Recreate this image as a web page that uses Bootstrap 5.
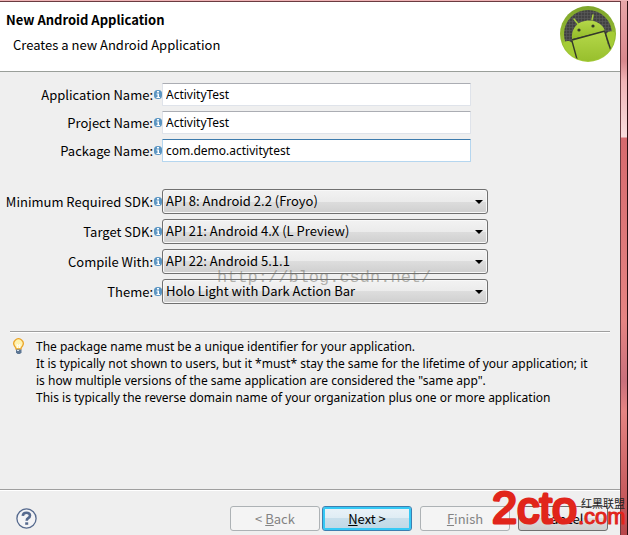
<!DOCTYPE html>
<html lang="en">
<head>
<meta charset="utf-8">
<meta name="viewport" content="width=device-width, initial-scale=1">
<title>New Android Application</title>
<link href="https://cdn.jsdelivr.net/npm/bootstrap@5.3.0/dist/css/bootstrap.min.css" rel="stylesheet">
<style>
  body { font-family: "Noto Sans CJK SC", "Noto Sans", sans-serif; font-size: 13px; line-height: 17px; color: #000; background: #efefef; }
  .window-frame { border-top: 1px solid #efb4b6; background: linear-gradient(#e9a5a8 0, #d8888d 60px, #f1b4b6 80px, #f8dcdc 136px, #d66a6e 137px, #e58483 320px, #c9707c 380px, #e58483 410px, #b8474b 100%); padding-right: 7px; box-shadow: inset -1px 0 #2b0d10; }
  .wizard { background: #efefef; border-top: 1px solid #6b3b40; border-right: 1px solid #6b3b40; }
  .wizard-head { background: #fff; border-bottom: 1px solid #9a9f9a; padding: 4px 4px 5px 6px; }
  .wizard-head h1 { font-size: 13px; line-height: 17px; margin: 5px 0 8px; }
  .wizard-head p { padding-left: 7px; }
  .form-area { padding: 11px 10px 0; }
  .form-line { display: grid; grid-template-columns: 143px 8px 1fr; column-gap: 1px; align-items: center; }
  .form-line label { display: flex; justify-content: flex-end; white-space: nowrap; padding-bottom: 1px; }
  .form-line svg { justify-self: center; }
  .fields { display: grid; row-gap: 5px; margin-right: 1px; }
  .fields .form-control, .combos .form-select { margin-left: -1px; color: #000; padding: 2px 3px; line-height: 17px; }
  .fields .form-control { font-family: "Noto Sans", sans-serif; font-size: 12px; max-width: 309px; height: 23px; border: 1px solid #dfe3ea; border-top-color: #abadb3; border-radius: 1px; }
  .fields .form-control.current { border-color: #b5d6ef; border-top-color: #3d7bad; }
  .combos { display: grid; row-gap: 5px; margin-top: 27px; }
  .combos .form-select { font-size: 13px; padding: 1px 3px 3px; max-width: 326px; height: 25px; border: 1px solid #707070; border-radius: 3px; box-shadow: inset 0 0 0 1px #f8f8f8;
    background: url("data:image/svg+xml,%3Csvg xmlns='http://www.w3.org/2000/svg' width='8' height='4'%3E%3Cpath d='M0 0h8L4 4z'/%3E%3C/svg%3E") no-repeat right 4px center / 8px 4px, linear-gradient(#f2f2f2, #ebebeb 50%, #dddddd 50%, #cfcfcf); }
  .watermark { top: 267px; left: 217px; font: 17px/20px "Liberation Mono", monospace; color: rgba(110, 110, 100, .5); pointer-events: none; }
  .rule { border-top: 1px solid #9f9f9f; border-bottom: 1px solid #fff; }
  .form-area .rule { margin-top: 27px; }
  .hint { padding: 5px 0 0 2px; gap: 10px; min-height: 152px; }
  .hint p { font-family: "Noto Sans", sans-serif; font-size: 12px; }
  .actions { padding: 15px 12px 4px 16px; }
  .action-btn { width: 90px; height: 25px; padding: 0; font-size: 13px; line-height: 17px; border-radius: 3px; color: #000; border: 1px solid #707070; background: linear-gradient(#f2f2f2, #ebebeb 50%, #ddd 50%, #cfcfcf); }
  .action-btn:disabled { color: #838383; border-color: #adb2b5; background: #f4f4f4; opacity: 1; }
  .action-btn.primary { border-color: #3c7fb1; box-shadow: inset 0 0 0 2px #35c9f5; background: linear-gradient(#eaf3f8, #dfecf4 50%, #c9dfeb 50%, #bfd8e6); }
  .step-pair { gap: 2px; }
  .site-logo { right: 0; bottom: 6px; pointer-events: none; }
</style>
<script src="https://cdn.jsdelivr.net/npm/bootstrap@5.3.0/dist/js/bootstrap.bundle.min.js"></script>
</head>
<body>
<svg width="0" height="0" class="position-absolute" aria-hidden="true">
  <symbol id="info" viewBox="0 0 8 9"><rect width="8" height="9" rx="3.500" fill="#5b95c2"/><path d="M3 1h2v1.500H3zM2.500 3.500H5V7h1v1H2.500V7h1V4.500h-1z" fill="#fff"/></symbol>
</svg>
<div class="window-frame position-relative min-vh-100 d-flex flex-column">
<main class="wizard flex-grow-1 d-flex flex-column">
  <header class="wizard-head d-flex justify-content-between">
    <div>
      <h1 class="fw-bold">New Android Application</h1>
      <p class="mb-0">Creates a new Android Application</p>
    </div>
    <svg width="56" height="60" viewBox="0 0 56 60" aria-hidden="true">
      <defs>
        <linearGradient id="ring" x2="0" y2="1"><stop stop-color="#7fa52c"/><stop offset="1" stop-color="#a4cb38"/></linearGradient>
        <linearGradient id="skin" x2="0" y2="1"><stop stop-color="#b5d84a"/><stop offset="1" stop-color="#93bb28"/></linearGradient>
        <pattern id="mesh" width="3" height="3" patternUnits="userSpaceOnUse"><path fill="#424242" d="M0 0h3v3H0z"/><path stroke="#5c5c5c" stroke-width=".6" d="M0 .5h3M.5 0v3"/></pattern>
        <clipPath id="disc"><circle cx="28" cy="28" r="27"/></clipPath>
      </defs>
      <circle cx="28" cy="28" r="28" fill="url(#ring)"/>
      <circle cx="28" cy="28" r="24" fill="url(#mesh)"/>
      <g clip-path="url(#disc)">
        <path d="M12 34L44 25L54 60H14z" fill="url(#skin)"/>
        <path d="M12 33C11 23 17 16 25 15C34 13 43 18 45 25z" fill="url(#skin)"/>
        <path d="M1 41Q3 34 9 35L13 37L19 58H2zM46 28Q49 23 56 27V45L50 48z" fill="#a5cc36"/>
        <path d="M12 34L45 25M12 35L18 57M45 26L52 48" fill="none" stroke="#34382b" stroke-width="1.400"/>
      </g>
      <path d="M18 18L14 13M32 14L33 9" stroke="#a9d03c" stroke-width="1.500" stroke-linecap="round"/>
      <circle cx="19" cy="24" r="1.600" fill="#343a28"/><circle cx="33" cy="20" r="1.600" fill="#343a28"/>
    </svg>
  </header>

  <form class="flex-grow-1 d-flex flex-column">
    <div class="form-area flex-grow-1">
      <div class="fields">
        <div class="form-line"><label for="appName">Application Name:</label><svg width="8" height="9" aria-hidden="true"><use href="#info"/></svg><input id="appName" type="text" class="form-control" value="ActivityTest"></div>
        <div class="form-line"><label for="projectName">Project Name:</label><svg width="8" height="9" aria-hidden="true"><use href="#info"/></svg><input id="projectName" type="text" class="form-control" value="ActivityTest"></div>
        <div class="form-line"><label for="packageName">Package Name:</label><svg width="8" height="9" aria-hidden="true"><use href="#info"/></svg><input id="packageName" type="text" class="form-control current" value="com.demo.activitytest"></div>
      </div>
      <div class="combos">
        <div class="form-line"><label for="minSdk">Minimum Required SDK:</label><svg width="8" height="9" aria-hidden="true"><use href="#info"/></svg><select id="minSdk" class="form-select"><option>API 8: Android 2.2 (Froyo)</option></select></div>
        <div class="form-line"><label for="targetSdk">Target SDK:</label><svg width="8" height="9" aria-hidden="true"><use href="#info"/></svg><select id="targetSdk" class="form-select"><option>API 21: Android 4.X (L Preview)</option></select></div>
        <div class="form-line"><label for="compileWith">Compile With:</label><svg width="8" height="9" aria-hidden="true"><use href="#info"/></svg><select id="compileWith" class="form-select"><option>API 22: Android 5.1.1</option></select></div>
        <div class="form-line"><label for="theme">Theme:</label><svg width="8" height="9" aria-hidden="true"><use href="#info"/></svg><select id="theme" class="form-select"><option>Holo Light with Dark Action Bar</option></select></div>
      </div>
      <div class="rule"></div>
      <div class="hint d-flex">
        <svg class="flex-shrink-0" width="14" height="17" viewBox="0 0 14 17" aria-hidden="true">
          <path d="M4 11Q4 9.500 2.500 8A4.700 4.700 0 1 1 10.500 8Q9 9.500 9 11z" fill="#fff3b0" stroke="#eba62b" stroke-width="1.300"/>
          <path d="M5.500 10L5 6.500L6.500 7.500L8 6.500L7.500 10" fill="none" stroke="#fff"/>
          <path d="M4 11.500h5.500v3L8 16H5.500L4 14.500z" fill="#5d7693"/><path d="M5 12.500h2" stroke="#dce5ee"/>
        </svg>
        <p class="mb-0">The package name must be a unique identifier for your application.<br>It is typically not shown to users, but it *must* stay the same for the lifetime of your application; it<br>is how multiple versions of the same application are considered the "same app".<br>This is typically the reverse domain name of your organization plus one or more application</p>
      </div>
    </div>
    <div class="rule"></div>
    <footer class="actions d-flex align-items-center">
      <button type="button" class="btn p-0 border-0 me-auto lh-1" aria-label="Help">
        <svg class="d-block" width="21" height="21" viewBox="0 0 21 21" aria-hidden="true"><circle cx="10.500" cy="10.500" r="9.600" fill="#f4f4f6" stroke="#566a8e" stroke-width="1.300"/><path d="M6.800 7.800Q7 4.700 10.500 4.700Q14 4.700 14 7.500Q14 9 12.200 10.200Q10.700 11.200 10.700 12.800" fill="none" stroke="#566a8e" stroke-width="2.600"/><path d="M9.200 14.300h3v2.500h-3z" fill="#566a8e"/></svg>
      </button>
      <div class="d-flex gap-2">
        <div class="d-flex step-pair">
          <button type="button" class="btn action-btn" disabled>&lt; <u>B</u>ack</button>
          <button type="submit" class="btn action-btn primary"><u>N</u>ext &gt;</button>
        </div>
        <button type="button" class="btn action-btn" disabled><u>F</u>inish</button>
        <button type="button" class="btn action-btn">Cancel</button>
      </div>
    </footer>
  </form>
</main>
<div class="watermark position-absolute">http://blog.csdn.net/</div>
<svg class="site-logo position-absolute" width="138" height="42" viewBox="0 0 138 42" role="img" aria-label="2cto.com">
  <g fill="#e1251b" stroke="#e1251b" stroke-linejoin="round" font-family="Liberation Sans, Arial, sans-serif">
    <text x="2" y="36" font-size="45" stroke-width="3">2cto</text>
    <text x="88" y="37" font-size="22" stroke-width="1">.com</text>
  </g>
  <text x="91" y="21" font-size="11" fill="#222" font-family="Noto Sans CJK SC, sans-serif">红黑联盟</text>
</svg>
</div>
</body>
</html>
